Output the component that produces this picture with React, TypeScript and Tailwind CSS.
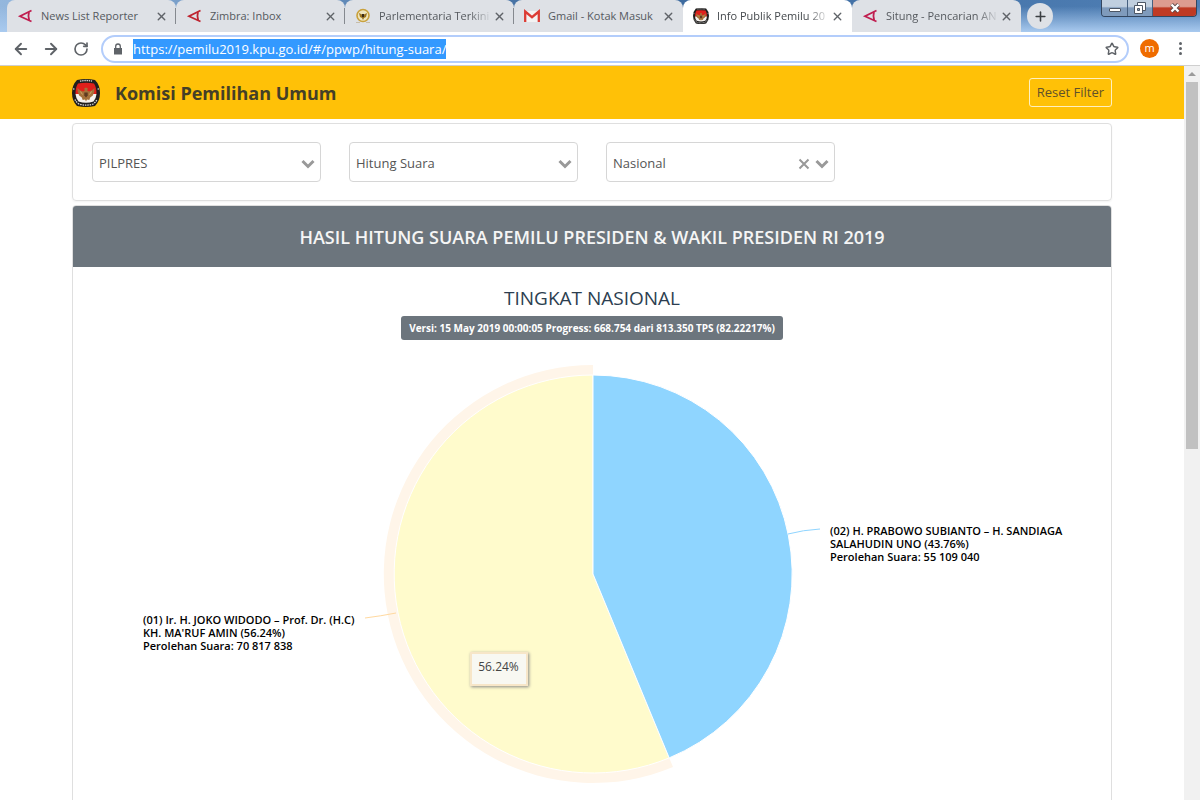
import React, { useState } from 'react';
import { ArrowLeft, ArrowRight, Plus, RotateCw, Star, X } from 'lucide-react';

interface TabItem {
  title: string;
  icon: 'red' | 'crimson' | 'dpr' | 'gmail' | 'kpu';
  active?: boolean;
  divider?: boolean;
  faded?: boolean;
}

interface FilterSelectProps {
  id: string;
  label: string;
  options: string[];
  clearable?: boolean;
}

const tabs: TabItem[] = [
  { title: 'News List Reporter', icon: 'crimson', divider: true },
  { title: 'Zimbra: Inbox', icon: 'red', divider: true },
  { title: 'Parlementaria Terkini', icon: 'dpr', divider: true, faded: true },
  { title: 'Gmail - Kotak Masuk', icon: 'gmail' },
  { title: 'Info Publik Pemilu 20', icon: 'kpu', active: true, faded: true },
  { title: 'Situng - Pencarian AN', icon: 'crimson', faded: true },
];

const KpuLogo: React.FC<{ className?: string }> = ({ className }) => (
  <svg viewBox="0 0 28 28" className={className} aria-hidden="true">
    <path d="M5 1Q14-1 23 1Q28 6 28 14Q28 22 23 27Q14 29 5 27Q0 22 0 14Q0 6 5 1Z" fill="#211f1e" />
    <path d="M6 4.500Q14 3 22 4.500Q24.500 8 24.500 15H3.500Q3.500 8 6 4.500Z" fill="#e0201b" />
    <path d="M3.500 15H24.500Q24 20 21.500 22.500Q14 25 6.500 22.500Q4 20 3.500 15Z" fill="#f6f2ee" />
    <path d="M14 8.500l1.800 1-.6 2 1.800 1 3-1.200 2.600-2.300-.4 4-1.400 3.500-2.600 2-.9 2.500-2.300-.5L14 22.500l-1-2-2.300.5-.9-2.500-2.600-2L5.800 13l-.4-4L8 11.300l3 1.200 1.800-1-.6-2z" fill="#a5713a" />
    <path d="M12.300 13.500h3.400v3L14 18.500l-1.700-2z" fill="#5e3a20" />
    <path d="M8.500 12.500l2 3m9-3l-2 3" stroke="#e3bd7a" strokeWidth=".7" />
    <path d="M8 2.200Q14 .8 20 2.200" fill="none" stroke="#ddd" strokeWidth="1.300" strokeDasharray="1.400 .8" />
    <path d="M3 20.500Q4 23 7 25Q14 27.300 21 25Q24 23 25 20.500" fill="none" stroke="#ddd" strokeWidth="1.300" strokeDasharray="1.500 .9" />
    <circle cx="1.800" cy="10" r=".7" fill="#fff" />
    <circle cx="26.200" cy="10" r=".7" fill="#fff" />
  </svg>
);

const Favicon: React.FC<{ icon: TabItem['icon'] }> = ({ icon }) => {
  if (icon === 'kpu') {
    return <KpuLogo className="size-4 shrink-0" />;
  }
  if (icon === 'gmail') {
    return (
      <svg viewBox="0 0 16 16" className="size-4 shrink-0" aria-hidden="true">
        <path d="M1 3h14v11H1z" fill="#f3f3f3" />
        <path d="M1.200 14V3.500L8 9.200l6.800-5.700V14" fill="none" stroke="#dc3c35" strokeWidth="2.300" />
      </svg>
    );
  }
  if (icon === 'dpr') {
    return (
      <svg viewBox="0 0 16 16" className="size-4 shrink-0" aria-hidden="true">
        <circle cx="8" cy="7.500" r="6" fill="#efe5bd" stroke="#c9a13b" strokeWidth="1.600" />
        <path d="M4 5l4 2 4-2-1 4-2 1-1 2-1-2-2-1z" fill="#9a7420" />
        <path d="M7 6h2v3H7z" fill="#38281a" />
        <path d="M1 14.500h4m6 0h4" stroke="#c7bda9" />
      </svg>
    );
  }
  return (
    <svg viewBox="0 0 16 16" className="size-4 shrink-0" aria-hidden="true">
      <path
        d="M14.500 2.500L3 8.200L14.500 13.500M12 3.800Q10.800 8 12.200 12.200"
        fill="none"
        stroke={icon === 'red' ? '#bf2430' : '#c01e50'}
        strokeWidth="1.800"
      />
    </svg>
  );
};

const BrowserTab: React.FC<{ tab: TabItem }> = ({ tab }) => (
  <div
    className={`relative flex h-8 min-w-0 max-w-[169px] flex-1 items-center rounded-t-lg pl-[10px] pr-2
      ${tab.active ? 'bg-white' : 'bg-[#dee1e6]'}`}
  >
    <Favicon icon={tab.icon} />
    <span
      className={`ml-2 flex-1 overflow-hidden whitespace-nowrap text-[11px] leading-4
        ${tab.faded ? '[mask-image:linear-gradient(to_right,black_80%,transparent)]' : ''}
        ${tab.active ? 'text-[#45494d]' : 'text-[#55595e]'}`}
    >
      {tab.title}
    </span>
    <button type="button" aria-label="Tutup tab" className="flex size-[14px] shrink-0 items-center justify-center text-[#5f6368]">
      <X size={13} strokeWidth={2.5} />
    </button>
    {tab.divider && <span className="absolute right-0 top-2 h-4 w-px bg-[#85898f]" />}
  </div>
);

const WindowButtons: React.FC = () => (
  <div className="mr-[3px] flex h-[17px] shrink-0 overflow-hidden rounded-b border border-t-0 border-[#33465f] text-white">
    <button type="button" aria-label="Minimalkan" className="flex w-[26px] items-center justify-center border-r border-[#46607f] bg-linear-to-b from-[#c0cfdf] from-40% to-[#7f9bbc] to-50%">
      <span className="mt-1 h-1 w-3 rounded-[1px] border border-[#4c5664] bg-white" />
    </button>
    <button type="button" aria-label="Pulihkan" className="flex w-[25px] items-center justify-center border-r border-[#46607f] bg-linear-to-b from-[#c0cfdf] from-40% to-[#7f9bbc] to-50%">
      <svg viewBox="0 0 12 12" className="size-3" aria-hidden="true">
        <path d="M3.500 .5h8v8h-8z" fill="#fff" stroke="#4c5664" />
        <path d="M.5 3.500h8v8h-8z" fill="#fff" stroke="#4c5664" />
        <path d="M3.500 6.500h2v2h-2z" fill="#8ba3bf" stroke="#4c5664" />
      </svg>
    </button>
    <button type="button" aria-label="Tutup" className="flex w-[43px] items-center justify-center bg-linear-to-b from-[#dd9c90] from-40% to-[#bf3a24] to-50%">
      <svg viewBox="0 0 12 10" className="h-[10px] w-3" aria-hidden="true">
        <path d="M2.500 1.500l7 7m0-7l-7 7" stroke="#5e4a4a" strokeWidth="4" />
        <path d="M2.500 1.500l7 7m0-7l-7 7" stroke="#fff" strokeWidth="2.400" />
      </svg>
    </button>
  </div>
);

const BrowserChrome: React.FC = () => {
  const [url, setUrl] = useState('https://pemilu2019.kpu.go.id/#/ppwp/hitung-suara/');

  return (
    <header className="shrink-0">
      <div className="bg-linear-to-r from-[#94b7dd] via-[#3b689c] via-50% to-[#4f7fb5]">
        <div className="flex items-start justify-between bg-linear-to-b from-transparent from-20% to-[#a9caef]">
          <div className="flex min-w-0 flex-1 pl-[7px]">
            {tabs.map((tab) => (
              <BrowserTab key={tab.title} tab={tab} />
            ))}
            <button type="button" aria-label="Tab baru" className="ml-[6px] mt-[3px] flex size-[26px] shrink-0 items-center justify-center rounded-full bg-[#dee1e6] text-[#3c4043]">
              <Plus size={15} strokeWidth={2.5} />
            </button>
          </div>
          <WindowButtons />
        </div>
      </div>
      <div className="flex h-[34px] items-center border-b border-[#cfcfcf] bg-white px-3 text-[#5f6368]">
        <button type="button" aria-label="Kembali" className="mr-3 flex size-[18px] items-center justify-center">
          <ArrowLeft size={18} strokeWidth={2.5} />
        </button>
        <button type="button" aria-label="Maju" className="mr-3 flex size-[18px] items-center justify-center">
          <ArrowRight size={18} strokeWidth={2.5} />
        </button>
        <button type="button" aria-label="Muat ulang" className="mr-[11px] flex size-[18px] items-center justify-center">
          <RotateCw size={16} strokeWidth={2.5} />
        </button>
        <div className="flex h-7 flex-1 items-center rounded-full border-2 border-[#b3cdfb] pl-[9px] pr-2">
          <svg viewBox="0 0 12 12" className="size-3" aria-hidden="true">
            <path d="M2 5h8v6.500H2z" fill="currentColor" />
            <path d="M3.700 5V3.300a2.300 2.300 0 0 1 4.600 0V5" fill="none" stroke="currentColor" strokeWidth="1.300" />
          </svg>
          <div className="relative ml-[9px] flex h-5 flex-1 items-center text-[13px] leading-5">
            <span aria-hidden="true" className="bg-[#3399ff] text-transparent">{url}</span>
            <input
              type="text"
              aria-label="Alamat"
              value={url}
              onChange={(e) => setUrl(e.target.value)}
              className="absolute inset-0 w-full bg-transparent text-white outline-none"
            />
          </div>
          <button type="button" aria-label="Tandai halaman">
            <Star size={14} strokeWidth={2.5} />
          </button>
        </div>
        <span className="ml-[11px] flex size-[19px] items-center justify-center rounded-full bg-[#ef6c00] pb-px text-[11px] leading-4 text-white">m</span>
        <button type="button" aria-label="Menu" className="ml-[13px] flex w-4 flex-col items-center gap-[2px]">
          <span className="size-[3px] rounded-full bg-[#5f6368]" />
          <span className="size-[3px] rounded-full bg-[#5f6368]" />
          <span className="size-[3px] rounded-full bg-[#5f6368]" />
        </button>
      </div>
    </header>
  );
};

const FilterSelect: React.FC<FilterSelectProps> = ({ id, label, options, clearable = false }) => (
  <div className="relative">
    <label htmlFor={id} className="sr-only">{label}</label>
    <select
      id={id}
      className="h-10 w-full appearance-none rounded border border-[#d6d6d6] bg-white pl-[6px] pr-12 pt-[2px] text-[13px] leading-5 text-[#555]"
    >
      {options.map((option) => (
        <option key={option}>{option}</option>
      ))}
    </select>
    <div className="pointer-events-none absolute inset-y-0 right-[6px] flex items-center gap-[5px] pt-[4px] text-[#999]">
      {clearable && (
        <button type="button" aria-label="Hapus pilihan" className="pointer-events-auto">
          <svg viewBox="0 0 12 12" className="size-3" aria-hidden="true">
            <path d="M1.500 1.500l9 9m0-9l-9 9" stroke="currentColor" strokeWidth="2" />
          </svg>
        </button>
      )}
      <svg viewBox="0 0 14 10" className="h-[10px] w-[14px]" aria-hidden="true">
        <path d="M1.500 2L7 7.500L12.500 2" fill="none" stroke="currentColor" strokeWidth="3" />
      </svg>
    </div>
  </div>
);

const ResultChart: React.FC = () => (
  <div className="relative mt-[10px]">
    <svg viewBox="0 0 1038 470" className="block h-auto w-full" role="img" aria-label="Diagram hasil hitung suara">
      <path d="M520 224V15A209 209 0 1 0 600 417Z" fill="#fff5e9" />
      <path d="M520 224L596.200 407.900A199 199 0 1 1 520 25Z" fill="#fffbcc" stroke="#fff" />
      <path d="M520 224V25A199 199 0 0 1 596.200 407.900Z" fill="#8fd5ff" stroke="#fff" />
      <path d="M715 184Q730 180 747 179" fill="none" stroke="#8fd5ff" />
      <path d="M323 263Q308 266 292 268" fill="none" stroke="#ffd9a0" />
      <g className="fill-black text-[11px] font-semibold">
        <text x="757" y="185">(02) H. PRABOWO SUBIANTO – H. SANDIAGA</text>
        <text x="757" y="198">SALAHUDIN UNO (43.76%)</text>
        <text x="757" y="211">Perolehan Suara: 55 109 040</text>
        <text x="70" y="274">(01) Ir. H. JOKO WIDODO – Prof. Dr. (H.C)</text>
        <text x="70" y="287">KH. MA'RUF AMIN (56.24%)</text>
        <text x="70" y="300">Perolehan Suara: 70 817 838</text>
      </g>
    </svg>
    <div
      role="tooltip"
      className="absolute left-[38.2%] top-[302px] flex h-[34px] w-[58px] items-center justify-center border-2 border-[#f7e6c8] bg-[#f8f8f2] pb-1 text-xs text-[#444] shadow-[1px_1px_3px_#888]"
    >
      56.24%
    </div>
  </div>
);

const Scrollbar: React.FC = () => (
  <div aria-hidden="true" className="flex w-4 shrink-0 flex-col items-center bg-[#f1f1f1]">
    <span className="flex h-4 items-center">
      <svg viewBox="0 0 8 4" className="h-1 w-2">
        <path d="M0 4L4 0L8 4Z" fill="#9b9b9b" />
      </svg>
    </span>
    <span className="h-1/2 w-3 bg-[#c1c1c1]" />
  </div>
);

const App: React.FC = () => (
  <div className="flex h-screen flex-col overflow-hidden bg-white font-['Open_Sans','Noto_Sans',sans-serif]">
    <BrowserChrome />
    <div className="flex min-h-0 flex-1">
      <main className="min-w-0 flex-1 overflow-hidden">
        <div className="bg-[#ffc107]">
          <div className="mx-auto flex h-[53px] max-w-[1040px] items-center">
            <KpuLogo className="size-7" />
            <h1 className="ml-[15px] text-lg font-bold text-[#443f27]">Komisi Pemilihan Umum</h1>
            <button type="button" className="ml-auto h-[29px] rounded-[3px] border border-[#fff0c0] px-[7px] text-[13px] leading-[27px] text-[#5f512a]">
              Reset Filter
            </button>
          </div>
        </div>

        <div className="mx-auto mt-1 flex max-w-[1040px] flex-col gap-1">
          <section className="grid grid-cols-4 gap-7 rounded border border-[#dfdfdf] px-[19px] py-[18px] shadow-xs">
            <FilterSelect id="jenis" label="Jenis pemilihan" options={['PILPRES']} />
            <FilterSelect id="data" label="Data" options={['Hitung Suara']} />
            <FilterSelect id="wilayah" label="Wilayah" options={['Nasional']} clearable />
          </section>

          <section className="overflow-hidden rounded border border-[#dfdfdf]">
            <h2 className="flex h-[61px] items-center justify-center bg-[#6c757d] text-lg font-semibold text-[#f5f5f5]">
              HASIL HITUNG SUARA PEMILU PRESIDEN &amp; WAKIL PRESIDEN RI 2019
            </h2>
            <div className="flex flex-col items-center pt-[19px]">
              <h3 className="text-[19px] leading-6 text-[#2c3e50]">TINGKAT NASIONAL</h3>
              <p className="mt-[6px] h-6 rounded-[3px] bg-[#6c757d] px-2 text-[10px] font-bold leading-6 text-white">
                Versi: 15 May 2019 00:00:05 Progress: 668.754 dari 813.350 TPS (82.22217%)
              </p>
            </div>
            <ResultChart />
          </section>
        </div>
      </main>
      <Scrollbar />
    </div>
  </div>
);

export default App;
